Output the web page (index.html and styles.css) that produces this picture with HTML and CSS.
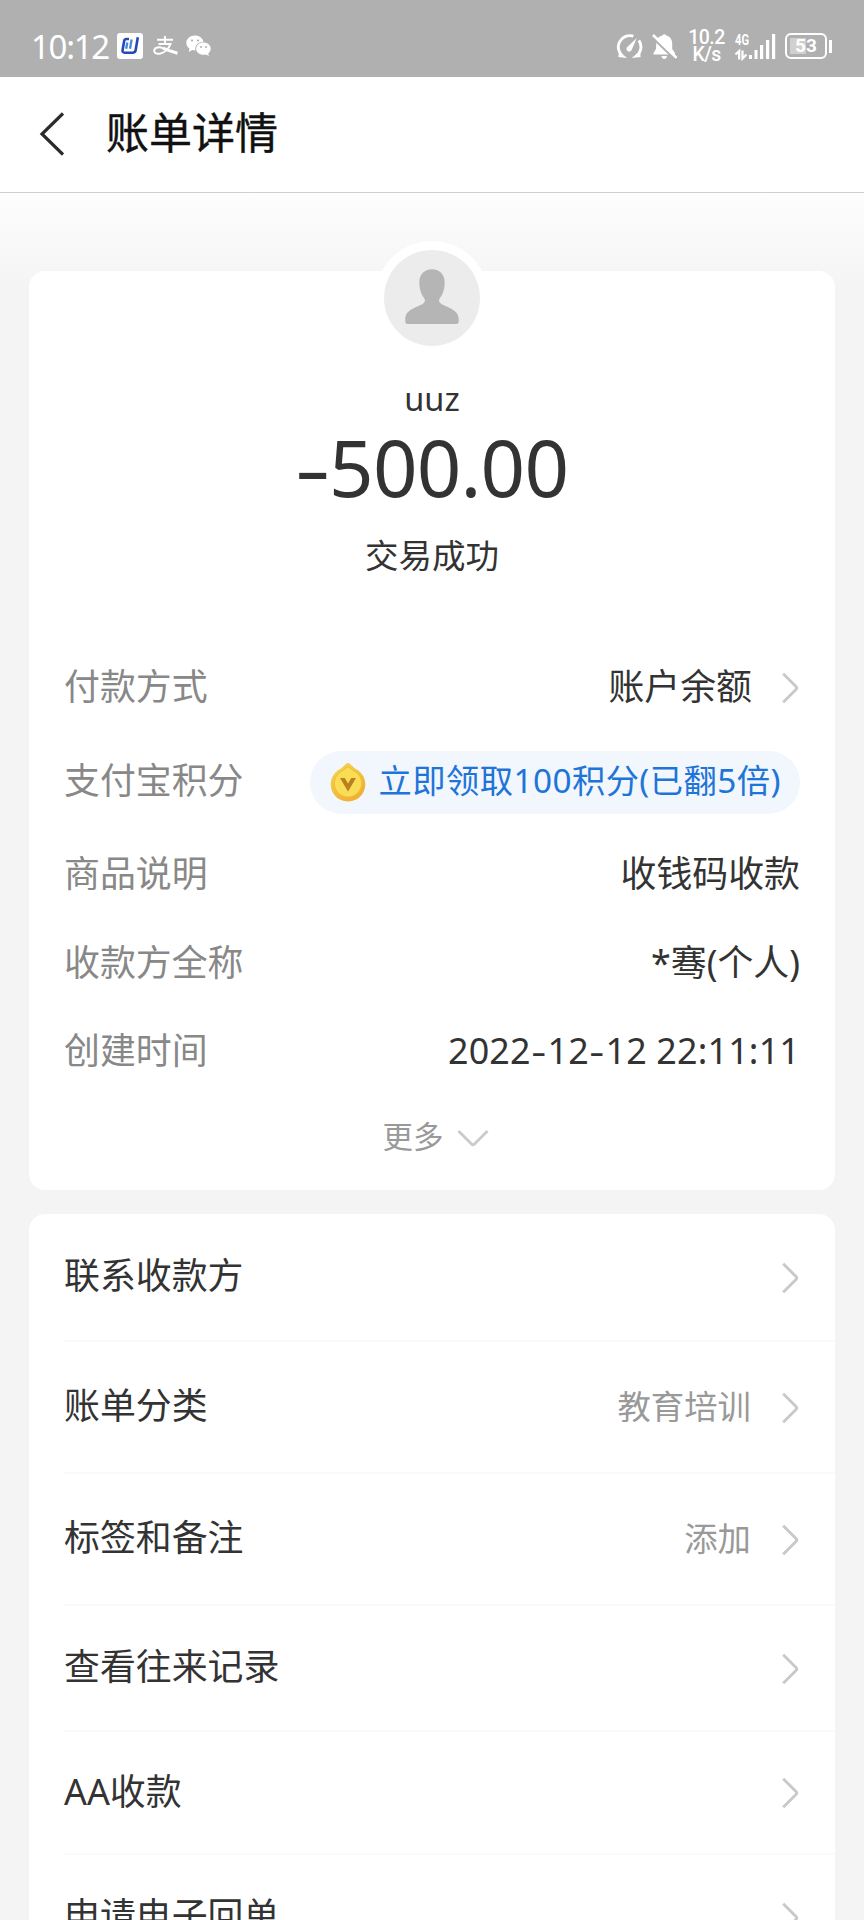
FILE: index.html
```html
<!DOCTYPE html>
<html lang="zh-CN">
<head>
<meta charset="utf-8">
<title>账单详情</title>
<link rel="stylesheet" href="styles.css">
</head>
<body>
<svg width="0" height="0" class="defs">
  <symbol id="chev" viewBox="0 0 17 32"><path d="M1.2 1.8 14 14.5q1.500 1.500 0 3L1.200 30.200" fill="none" stroke="#c9c9c9" stroke-width="2.900"/></symbol>
</svg>
<div class="status">
  <div class="status-left">
    <span class="time">10:12</span>
    <svg class="ic-app" width="26" height="26" viewBox="0 0 26 26"><rect width="26" height="26" rx="3" fill="#fff"/><path d="M12 6H9.3Q7.6 6 7.200 7.700L5.600 17Q5.200 19.700 7.800 19.700H15.500Q18.200 19.700 18.700 17L20.800 4.200" fill="none" stroke="#2549b8" stroke-width="2.600"/><path d="M10.300 9.500 9.200 15.800M14.600 6.500 13 15.800" fill="none" stroke="#4a86e0" stroke-width="2.300"/></svg>
    <svg class="ic-pay" width="26" height="20" viewBox="0 0 26 20" fill="none" stroke="#fff" stroke-width="2"><path d="M4 3.800H20M12 0V8M5.500 8H17.500Q14.500 15.500 7.500 17.500C2.500 18.800.8 16 1.300 14 2 11 6.500 10.800 10 12.200"/><path d="M10 12.200Q16 15 24.500 17.200" stroke-width="3"/></svg>
    <svg class="ic-chat" width="25" height="22" viewBox="0 0 25 22"><path d="M9 .5C4 .5.300 3.700.300 7.800c0 2.400 1.200 4.400 3.200 5.800L2.800 17l3.400-1.900q1.500.4 3.200.4C8.500 10.500 12 7 17.600 6.800 16.700 3 13.200.5 9 .5Z" fill="#fff"/><path d="M17.400 7.600c-4.200 0-7.200 2.700-7.200 6.100s3 6.100 7.200 6.100q1.300 0 2.600-.4l2.900 1.600-.7-2.600c1.600-1.200 2.500-2.800 2.500-4.700 0-3.400-3.100-6.100-7.300-6.100Z" fill="#fff"/><g fill="#b0b0b0"><circle cx="6" cy="5.500" r="1.100"/><circle cx="12" cy="5.500" r="1.100"/><circle cx="15" cy="12" r="1"/><circle cx="20" cy="12" r="1"/></g></svg>
  </div>
  <div class="status-right">
    <svg class="ic-gauge" width="27" height="26" viewBox="0 0 27 26" fill="none" stroke="#fff" stroke-width="2.900"><path d="M2.500 22.600 6.500 23A11.500 11.500 0 0 1 17.400 3.200M22.900 7.400A11.500 11.500 0 0 1 20.500 23L24.500 22.600"/><path d="M20.800 5 15.500 17.300A2.700 2.700 0 1 1 11.500 13.800Z" fill="#fff" stroke="none"/></svg>
    <svg class="ic-bell" width="25" height="27" viewBox="0 0 25 27"><path d="M4.300 9C5.100 5.300 7.300 3 10.300 2.500Q12.300 0 14.300 2.500C18 3.300 20.200 6.500 20.200 10.500V16L23 20V21.500H1.500V20L4 16Z" fill="#fff"/><path d="M9.500 23H15Q14.500 26 12.200 26 10 26 9.500 23Z" fill="#fff"/><path d="M-.5 3.800 23 26.500" stroke="#b0b0b0" stroke-width="2"/><path d="M1 2 24.500 24.800" stroke="#fff" stroke-width="2.500"/></svg>
    <div class="speed"><span>10.2</span><span>K/s</span></div>
    <svg class="ic-signal" width="41" height="27" viewBox="0 0 41 27"><text x="0" y="12" textLength="14" lengthAdjust="spacingAndGlyphs" class="net">4G</text><path d="M14 22h3v4h-3zM19.500 17h3v9h-3zM25 12h3.200v14h-3.200zM31 7h3.200v19h-3.200zM37 1h3.200v25h-3.200z" fill="#fff"/><path d="M.5 21.500 4.200 18V26.500M7.500 17.500V25.500L11.500 21.500" fill="none" stroke="#fff" stroke-width="2.200"/></svg>
    <div class="battery"><div class="cell">53</div><div class="nub"></div></div>
  </div>
</div>

<header class="header">
  <svg width="26" height="44" viewBox="0 0 26 44"><path d="M25 1.500 4 22 25 42.500" fill="none" stroke="#2b2b2b" stroke-width="3.200"/></svg>
  <h1>账单详情</h1>
</header>

<main class="page">
  <section class="card bill">
    <svg class="avatar" width="116" height="116" viewBox="0 0 116 116"><circle cx="58" cy="58" r="57" fill="#fff"/><circle cx="58" cy="58" r="48" fill="#ececec"/><path d="M58 29.300c-8 0-12.700 5.500-12.700 13.500 0 6.500 2 12 5.200 16 1.200 2 .2 3.800-2 5.200C42 67.500 31.300 70 31.300 79v3Q31.300 84 33.500 84h49Q84.700 84 84.700 82v-3c0-9-10.700-11.500-17.200-15-2.200-1.400-3.200-3.200-2-5.200 3.200-4 5.200-9.500 5.200-16 0-8-4.700-13.500-12.700-13.500Z" fill="#b5b5b5"/></svg>
    <div class="payee">uuz</div>
    <div class="amount"><span class="dash">-</span>500.00</div>
    <div class="state">交易成功</div>
    <dl class="details">
      <div class="row tall"><dt>付款方式</dt><dd class="linked"><span>账户余额</span><svg class="chev"><use href="#chev"/></svg></dd></div>
      <div class="row tall"><dt>支付宝积分</dt><dd class="pill">
        <svg width="36" height="40" viewBox="0 0 36 40"><defs><linearGradient id="gold" x1="0" y1="0" x2="0.600" y2="1"><stop offset="0" stop-color="#f4d84e"/><stop offset="1" stop-color="#f2ae35"/></linearGradient></defs><path d="M18 1Q19.500 1 21 2.800L25 6.500A17.300 17.300 0 1 1 11 6.500L15 2.800Q16.500 1 18 1Z" fill="url(#gold)"/><path d="M18 5Q19 5 20 6L24 9A13.700 13.700 0 1 1 12 9L16 6Q17 5 18 5Z" fill="#fbdc55" stroke="#eebd3b"/><path d="M10 16H14.800L18 21.500 21.300 16H26L18 29.500Z" fill="#b97f20"/></svg>
        <span>立即领取100积分(已翻5倍)</span></dd></div>
      <div class="row mid"><dt>商品说明</dt><dd class="value">收钱码收款</dd></div>
      <div class="row"><dt>收款方全称</dt><dd class="value">*骞(个人)</dd></div>
      <div class="row"><dt>创建时间</dt><dd class="value date">2022<span class="dash">-</span>12<span class="dash">-</span>12 22:11:11</dd></div>
    </dl>
    <div class="more"><span>更多</span><svg width="32" height="20" viewBox="0 0 32 20"><path d="M1.500 2 14.500 15q1.500 1.500 3 0L30.500 2" fill="none" stroke="#cbcbcb" stroke-width="2.900"/></svg></div>
  </section>

  <section class="card menu">
    <div class="item i128"><span>联系收款方</span><svg class="chev"><use href="#chev"/></svg></div>
    <div class="item i132"><span>账单分类</span><em>教育培训</em><svg class="chev"><use href="#chev"/></svg></div>
    <div class="item i132"><span>标签和备注</span><em>添加</em><svg class="chev"><use href="#chev"/></svg></div>
    <div class="item i126"><span>查看往来记录</span><svg class="chev"><use href="#chev"/></svg></div>
    <div class="item i123"><span>AA收款</span><svg class="chev"><use href="#chev"/></svg></div>
    <div class="item i126"><span>申请电子回单</span><svg class="chev"><use href="#chev"/></svg></div>
  </section>
</main>
</body>
</html>
```
FILE: styles.css
```css
* { box-sizing: border-box; }
html { height: 1920px; overflow: hidden; }
body {
  margin: 0;
  width: 864px;
  height: 1920px;
  overflow: hidden;
  display: flex;
  flex-direction: column;
  background: #f4f4f4;
  color: #333;
  font-family: "Noto Sans", "Noto Sans CJK SC", sans-serif;
  font-size: 35.900px;
  line-height: 1;
}
svg { display: block; flex: none; }
.defs { display: none; }

.status {
  flex: none;
  height: 77px;
  padding: 15px 32px 0 31px;
  background: #b0b0b0;
  color: #fff;
  display: flex;
  justify-content: space-between;
  align-items: center;
}
.status-left, .status-right { display: flex; align-items: center; }
.time { font-size: 33px; letter-spacing: -1.300px; width: 86px; white-space: nowrap; }
.ic-pay { margin-left: 10px; }
.ic-chat { margin-left: 7px; }
.ic-bell { margin-left: 9px; }
.speed {
  margin-left: 11px;
  width: 37px;
  display: flex;
  flex-direction: column;
  align-items: center;
  font: 500 19.500px/17px Roboto, sans-serif;
  letter-spacing: -0.6px;
}
.ic-signal { margin-left: 10px; overflow: visible; }
.net { font: 700 14.500px Roboto, sans-serif; fill: #fff; }
.battery { margin-left: 9px; display: flex; align-items: center; gap: 2px; }
.cell {
  width: 42px;
  height: 26px;
  border: 2px solid #fff;
  border-radius: 6px;
  background: linear-gradient(90deg, #d0d0d0 50%, #b0b0b0 50%) 3px 3px / 32px 16px no-repeat;
  font: 700 19px/22px Roboto, sans-serif;
  text-align: center;
}
.nub { width: 3px; height: 13px; background: #fff; }

.header {
  flex: none;
  height: 116px;
  padding: 0 0 2px 38px;
  background: #fff;
  border-bottom: 1px solid #cfcfcf;
  display: flex;
  align-items: center;
  gap: 42px;
}
.header h1 { margin: 0 0 2px; font-size: 43px; line-height: 60px; font-weight: 400; color: #111; -webkit-text-stroke: 0.4px #111; }

.page {
  flex: none;
  padding: 78px 29px 0;
  background: linear-gradient(#fdfdfd, #f4f4f4 100px);
}
.card { background: #fff; border-radius: 16px; }

.bill {
  height: 919px;
  display: flex;
  flex-direction: column;
  align-items: center;
}
.avatar { margin-top: -31px; }
.payee { margin-top: 19px; font-size: 32.500px; line-height: 48px; }
.amount { margin-top: -6px; font-size: 78px; line-height: 100px; white-space: nowrap; letter-spacing: -0.8px; }
.amount .dash { display: inline-block; transform: scaleX(1.43); margin: 0 5px 0 4px; }
.state { margin-top: 14px; font-size: 33.500px; line-height: 48px; }

.details { width: 100%; margin: 62px 0 2px; padding: 0 35px; }
.row { height: 88px; display: flex; align-items: center; justify-content: space-between; }
.row.tall { height: 94px; }
.row.mid { height: 91px; }
dt { color: #888; padding-bottom: 2px; }
dd { margin: 0; white-space: nowrap; }
dd.value, .linked span { padding-bottom: 2px; }
.linked { display: flex; align-items: center; }
.chev { width: 17px; height: 32px; }
.linked .chev { margin: 0 1px 0 30px; }
.date { letter-spacing: 0.150px; }
.date .dash { display: inline-block; transform: scaleX(1.3); margin: 0 2.500px; }
dd.pill {
  height: 63px;
  padding: 0 19px 0 20px;
  border-radius: 32px;
  background: #f1f7fd;
  color: #1f74d8;
  font-size: 33.300px;
  letter-spacing: 0.450px;
  display: flex;
  align-items: center;
  gap: 12px;
}
.pill span { padding-bottom: 3px; }
.more {
  height: 82px;
  display: flex;
  align-items: center;
  gap: 13px;
  margin-left: 7px;
  font-size: 30.500px;
  color: #999;
}
.more span { padding-bottom: 5px; }

.menu { margin-top: 24px; padding-left: 35px; }
.item {
  border-bottom: 2px solid #fafafa;
  padding: 1px 36px 0 0;
  display: flex;
  align-items: center;
}
.item span { flex: 1; margin-bottom: 3px; }
.item em { font-style: normal; font-size: 33.400px; color: #999; margin: 0 31px 2px 0; }
.i123 { height: 123px; }
.i126 { height: 126px; }
.i128 { height: 128px; }
.i132 { height: 132px; }
```
